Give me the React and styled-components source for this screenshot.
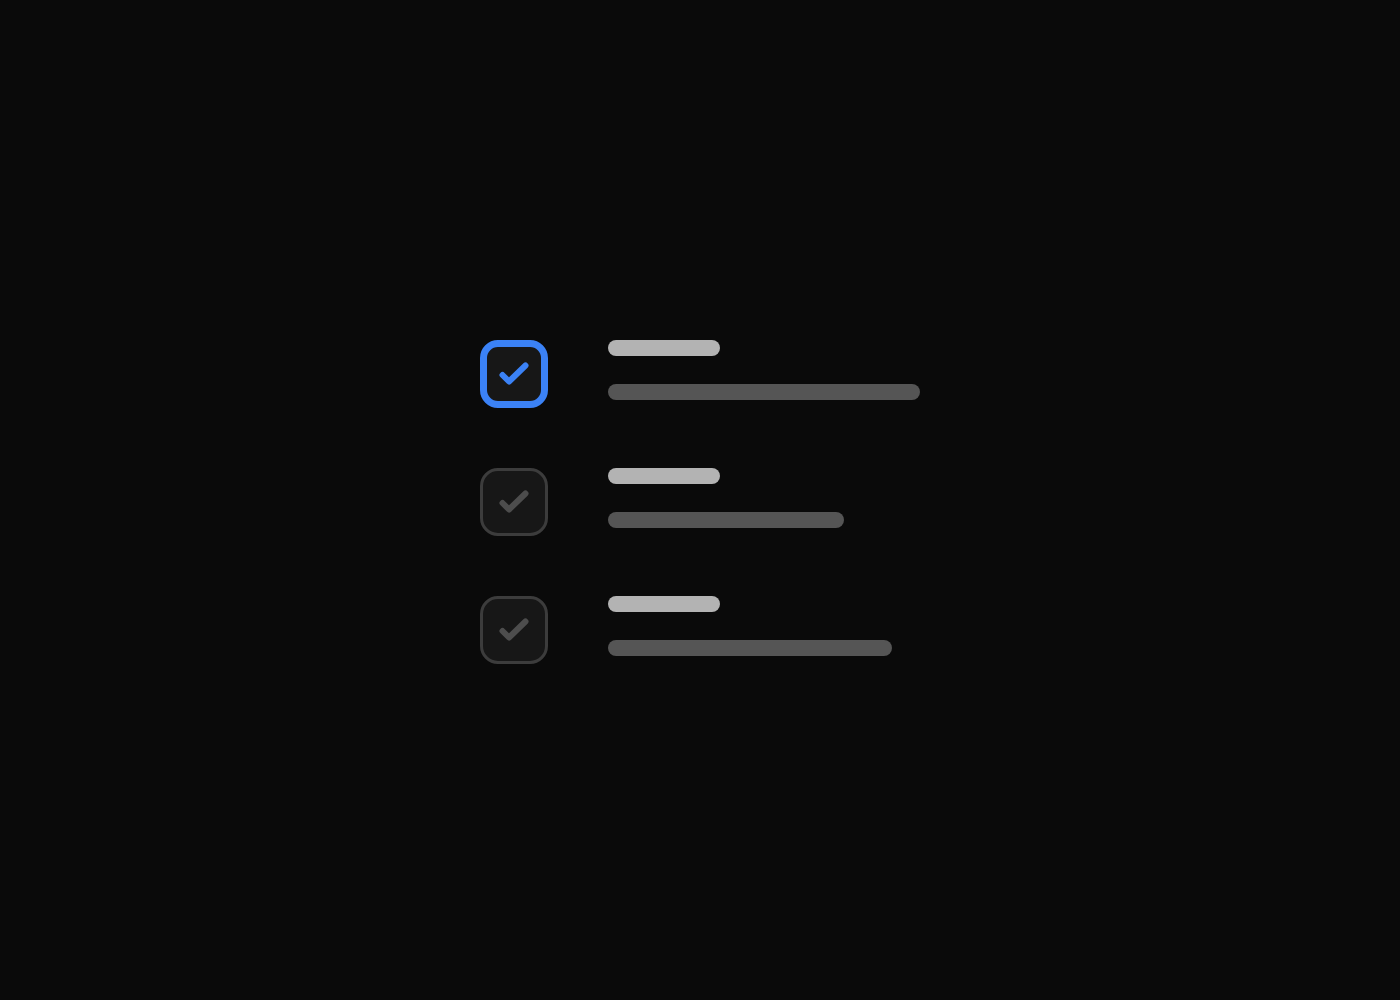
import React from "react";
import styled, { createGlobalStyle } from "styled-components";

const Global = createGlobalStyle`
  html, body { margin: 0; padding: 0; background: #0a0a0a; }
  body { font-family: "Inter", "Liberation Sans", sans-serif; }
`;

const Page = styled.div`
  width: 1400px;
  height: 1000px;
  background: #0a0a0a;
  display: flex;
  flex-direction: column;
  align-items: flex-start;
  padding: 340px 0 0 480px;
  box-sizing: border-box;
`;

const List = styled.div`
  display: flex;
  flex-direction: column;
  gap: 60px;
`;

const Row = styled.div`
  display: flex;
  align-items: flex-start;
  gap: 60px;
`;

const Box = styled.div`
  width: 68px;
  height: 68px;
  box-sizing: border-box;
  border-radius: 18px;
  background: #171717;
  border: ${(p) => (p.$active ? "7px solid #3b82f6" : "3px solid #3c3c3c")};
  display: flex;
  align-items: center;
  justify-content: center;
  color: ${(p) => (p.$active ? "#3b82f6" : "#4d4d4d")};
  flex-shrink: 0;
`;

const Lines = styled.div`
  display: flex;
  flex-direction: column;
  gap: 28px;
`;

const Bar = styled.div`
  height: 16px;
  border-radius: 8px;
  width: ${(p) => p.$w}px;
  background: ${(p) => (p.$title ? "#b3b3b3" : "#555555")};
`;

const Check = () => (
  <svg width="34" height="34" viewBox="0 0 34 34" fill="none">
    <path
      d="M5.5 18 L12 24.5 L28.5 8.5"
      stroke="currentColor"
      strokeWidth="6"
      strokeLinecap="round"
      strokeLinejoin="round"
    />
  </svg>
);

const items = [
  { active: true, w: 312 },
  { active: false, w: 236 },
  { active: false, w: 284 },
];

export default function App() {
  return (
    <>
      <Global />
      <Page>
        <List>
          {items.map((it, i) => (
            <Row key={i}>
              <Box $active={it.active}>
                <Check />
              </Box>
              <Lines>
                <Bar $title $w={112} />
                <Bar $w={it.w} />
              </Lines>
            </Row>
          ))}
        </List>
      </Page>
    </>
  );
}
